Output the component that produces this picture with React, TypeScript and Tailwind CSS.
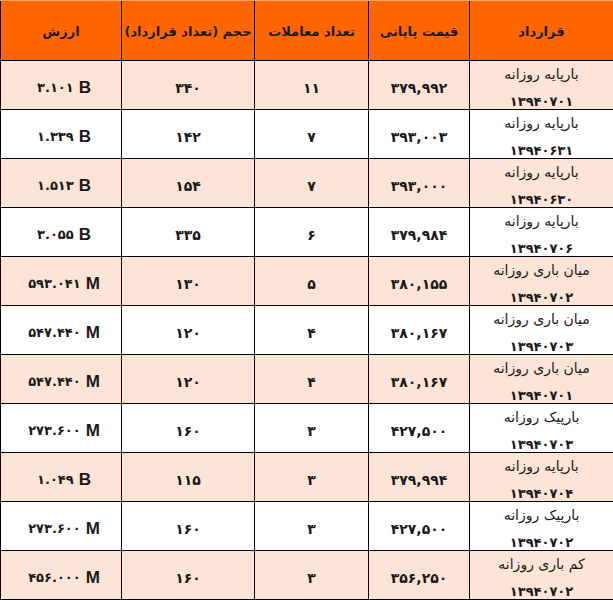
import React from "react";

type Row = { name: string; date: string; price: string; count: string; vol: string; val: string; unit: string };

const rows: Row[] = [
  { name: "بارپایه روزانه", date: "۱۳۹۴۰۷۰۱", price: "۳۷۹,۹۹۲", count: "۱۱", vol: "۳۴۰", val: "۳.۱۰۱", unit: "B" },
  { name: "بارپایه روزانه", date: "۱۳۹۴۰۶۳۱", price: "۳۹۳,۰۰۳", count: "۷", vol: "۱۴۲", val: "۱.۳۳۹", unit: "B" },
  { name: "بارپایه روزانه", date: "۱۳۹۴۰۶۳۰", price: "۳۹۳,۰۰۰", count: "۷", vol: "۱۵۴", val: "۱.۵۱۳", unit: "B" },
  { name: "بارپایه روزانه", date: "۱۳۹۴۰۷۰۶", price: "۳۷۹,۹۸۴", count: "۶", vol: "۳۳۵", val: "۳.۰۵۵", unit: "B" },
  { name: "میان باری روزانه", date: "۱۳۹۴۰۷۰۲", price: "۳۸۰,۱۵۵", count: "۵", vol: "۱۳۰", val: "۵۹۳.۰۴۱", unit: "M" },
  { name: "میان باری روزانه", date: "۱۳۹۴۰۷۰۳", price: "۳۸۰,۱۶۷", count: "۴", vol: "۱۲۰", val: "۵۴۷.۴۴۰", unit: "M" },
  { name: "میان باری روزانه", date: "۱۳۹۴۰۷۰۱", price: "۳۸۰,۱۶۷", count: "۴", vol: "۱۲۰", val: "۵۴۷.۴۴۰", unit: "M" },
  { name: "بارپیک روزانه", date: "۱۳۹۴۰۷۰۳", price: "۴۲۷,۵۰۰", count: "۳", vol: "۱۶۰", val: "۲۷۳.۶۰۰", unit: "M" },
  { name: "بارپایه روزانه", date: "۱۳۹۴۰۷۰۴", price: "۳۷۹,۹۹۴", count: "۳", vol: "۱۱۵", val: "۱.۰۴۹", unit: "B" },
  { name: "بارپیک روزانه", date: "۱۳۹۴۰۷۰۲", price: "۴۲۷,۵۰۰", count: "۳", vol: "۱۶۰", val: "۲۷۳.۶۰۰", unit: "M" },
  { name: "کم باری روزانه", date: "۱۳۹۴۰۷۰۲", price: "۳۵۶,۲۵۰", count: "۳", vol: "۱۶۰", val: "۴۵۶.۰۰۰", unit: "M" },
];

const grid = "grid grid-cols-[144px_101px_114px_133px_121px]";
const cell = "flex items-center justify-center border-l border-black";

export default function App() {
  return (
    <div
      dir="rtl"
      className="w-[613px] h-[600px] overflow-hidden bg-white text-[#1a1a1a] font-['DejaVu_Sans',sans-serif]"
    >
      <div className={`${grid} h-[61px] bg-[#ff6600] border-t border-[#f3a86c] border-b border-b-black`}>
        {["قرارداد", "قیمت پایانی", "تعداد معاملات", "حجم (تعداد قرارداد)", "ارزش"].map((h) => (
          <div key={h} className={`${cell} text-[13px] font-bold whitespace-nowrap pt-[3px]`}>
            {h}
          </div>
        ))}
      </div>
      {rows.map((r, i) => (
        <div
          key={i}
          className={`${grid} h-[49px] border-b border-black ${i % 2 === 0 ? "bg-[#fce4d6]" : "bg-white"}`}
        >
          <div className={`${cell} flex-col text-[14px] leading-[27px] overflow-visible`}>
            <span>{r.name}</span>
            <span className="font-bold text-[13px]">{r.date}</span>
          </div>
          <div className={`${cell} text-[14px] font-bold`}>{r.price}</div>
          <div className={`${cell} text-[14px] font-bold`}>{r.count}</div>
          <div className={`${cell} text-[14px] font-bold`}>{r.vol}</div>
          <div className={`${cell} text-[13px] font-bold pl-[6px]`}>
            <span dir="ltr" className="flex items-center gap-[5px]">
              <span>{r.val}</span>
              <span className="font-['Liberation_Sans',sans-serif] text-[17px]">{r.unit}</span>
            </span>
          </div>
        </div>
      ))}
    </div>
  );
}
